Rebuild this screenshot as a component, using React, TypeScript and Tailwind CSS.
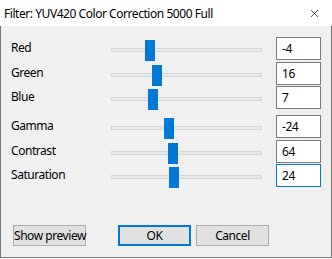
import { X } from 'lucide-react';

const sliders = [
  { label: 'Red', value: '-4', pos: 34, gap: 'mt-0', focused: false },
  { label: 'Green', value: '16', pos: 41, gap: 'mt-[2px]', focused: false },
  { label: 'Blue', value: '7', pos: 37, gap: 'mt-[1px]', focused: false },
  { label: 'Gamma', value: '-24', pos: 53, gap: 'mt-[6px]', focused: false },
  { label: 'Contrast', value: '64', pos: 57, gap: 'mt-[2px]', focused: false },
  { label: 'Saturation', value: '24', pos: 58, gap: 'mt-[1px]', focused: true }
];

export default function App() {
  return (
    <div className="w-[332px] h-[259px] bg-white font-['Noto_Sans',sans-serif] text-[12px] tracking-[-0.45px] text-black">
      <div className="flex flex-col h-[258px]">
        {/* Title bar */}
        <div className="h-[26px] flex items-center justify-between bg-white pl-[4px] pr-[11px]">
          <span className="leading-none pt-[1px] whitespace-nowrap">Filter: YUV420 Color Correction 5000 Full</span>
          <X className="w-[13px] h-[13px]" strokeWidth={1.2} />
        </div>

        {/* Client area */}
        <div className="flex-1 flex flex-col bg-[#f0f0f0] border-x border-b border-[#777777] pt-[11px]">
          {sliders.map((s) => (
            <div key={s.label} className={`flex h-[23px] pl-[10px] ${s.gap}`}>
              <div className="w-[100px] flex items-center leading-none pb-[1px]">{s.label}</div>
              <div className="relative w-[151px] h-[4px] mt-[11px] bg-[#e7eaea] border border-[#d6d6d6]">
                <div
                  className="absolute top-[-9px] w-[10px] h-[21px] bg-[#0078d7]"
                  style={{ left: s.pos - 1 }}
                />
              </div>
              <div
                className={`ml-[14px] w-[45px] h-[23px] bg-white border flex items-center pl-[5px] leading-none ${
                  s.focused ? 'border-[#0078d7]' : 'border-[#7a7a7a]'
                }`}
              >
                {s.value}
              </div>
            </div>
          ))}

          <div className="flex mt-[38px] pl-[12px]">
            <button className="w-[73px] h-[21px] bg-[#e1e1e1] border border-[#adadad] leading-none whitespace-nowrap">
              Show preview
            </button>
            <button className="ml-[32px] w-[73px] h-[21px] bg-[#e1e1e1] border-2 border-[#0078d7] leading-none">
              OK
            </button>
            <button className="ml-[5px] w-[73px] h-[21px] bg-[#e1e1e1] border border-[#adadad] leading-none">
              Cancel
            </button>
          </div>
        </div>
      </div>
    </div>
  );
}
